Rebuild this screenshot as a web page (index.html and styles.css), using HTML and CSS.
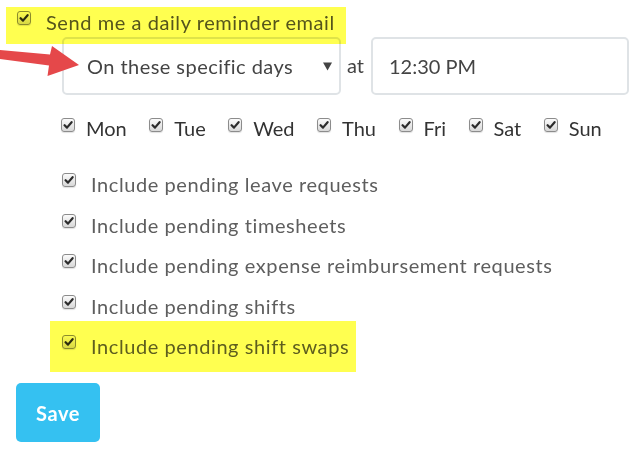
FILE: index.html
```html
<!DOCTYPE html>
<html>
<head>
<meta charset="utf-8">
<link rel="stylesheet" href="styles.css">
</head>
<body>
<div class="page">
  <div class="main">
    <span class="cb"><svg viewBox="0 0 10 10"><path d="M1.6 5.2 L4 7.6 L8.6 2.2" /></svg></span>
    <span class="main-label">Send me a daily reminder email</span>
  </div>
  <div class="schedule">
    <div class="select">
      <span class="select-text">On these specific days</span>
      <svg class="caret" viewBox="0 0 10 9"><path d="M0 0 H10 L5 9 Z"/></svg>
    </div>
    <span class="at">at</span>
    <div class="time">12:30 PM</div>
  </div>
  <div class="days">
    <label class="day"><span class="cb"><svg viewBox="0 0 10 10"><path d="M1.6 5.2 L4 7.6 L8.6 2.2" /></svg></span>Mon</label>
    <label class="day"><span class="cb"><svg viewBox="0 0 10 10"><path d="M1.6 5.2 L4 7.6 L8.6 2.2" /></svg></span>Tue</label>
    <label class="day"><span class="cb"><svg viewBox="0 0 10 10"><path d="M1.6 5.2 L4 7.6 L8.6 2.2" /></svg></span>Wed</label>
    <label class="day"><span class="cb"><svg viewBox="0 0 10 10"><path d="M1.6 5.2 L4 7.6 L8.6 2.2" /></svg></span>Thu</label>
    <label class="day"><span class="cb"><svg viewBox="0 0 10 10"><path d="M1.6 5.2 L4 7.6 L8.6 2.2" /></svg></span>Fri</label>
    <label class="day"><span class="cb"><svg viewBox="0 0 10 10"><path d="M1.6 5.2 L4 7.6 L8.6 2.2" /></svg></span>Sat</label>
    <label class="day"><span class="cb"><svg viewBox="0 0 10 10"><path d="M1.6 5.2 L4 7.6 L8.6 2.2" /></svg></span>Sun</label>
  </div>
  <div class="includes">
    <label class="inc"><span class="cb"><svg viewBox="0 0 10 10"><path d="M1.6 5.2 L4 7.6 L8.6 2.2" /></svg></span><span class="inc-label">Include pending leave requests</span></label>
    <label class="inc"><span class="cb"><svg viewBox="0 0 10 10"><path d="M1.6 5.2 L4 7.6 L8.6 2.2" /></svg></span><span class="inc-label">Include pending timesheets</span></label>
    <label class="inc"><span class="cb"><svg viewBox="0 0 10 10"><path d="M1.6 5.2 L4 7.6 L8.6 2.2" /></svg></span><span class="inc-label">Include pending expense reimbursement requests</span></label>
    <label class="inc"><span class="cb"><svg viewBox="0 0 10 10"><path d="M1.6 5.2 L4 7.6 L8.6 2.2" /></svg></span><span class="inc-label">Include pending shifts</span></label>
    <label class="inc"><span class="cb"><svg viewBox="0 0 10 10"><path d="M1.6 5.2 L4 7.6 L8.6 2.2" /></svg></span><span class="inc-label">Include pending shift swaps</span></label>
  </div>
  <button class="save">Save</button>

  <div class="hl hl-top"></div>
  <div class="hl hl-bottom"></div>
  <svg class="arrow" viewBox="0 0 82 40"><path d="M0 10 L50 14.5 L52 6 L79 25 L47.5 36 L49 25.5 L0 19 Z"/></svg>
</div>
</body>
</html>
```

FILE: styles.css
```css
body {
  margin: 0;
  background: #fff;
  font-family: Lato, "Open Sans", sans-serif;
}

.page {
  position: relative;
  width: 640px;
  height: 461px;
  overflow: hidden;
}

.cb {
  flex: none;
  width: 14px;
  height: 14px;
  box-sizing: border-box;
  border: 1px solid #8c8c8c;
  border-radius: 3px;
  background: linear-gradient(#fbfbfb, #d8d8d8);
  box-shadow: 0 1px 1px rgba(0, 0, 0, 0.12);
  display: flex;
  align-items: center;
  justify-content: center;
}

.cb svg {
  width: 10px;
  height: 10px;
}

.cb path {
  fill: none;
  stroke: #2b2b2b;
  stroke-width: 2.2;
  stroke-linecap: round;
  stroke-linejoin: round;
}

.main {
  display: flex;
  height: 37px;
  padding-left: 17px;
}

.main .cb {
  margin-top: 11px;
}

.main-label {
  margin: 11px 0 0 15px;
  font-size: 20px;
  line-height: 23px;
  letter-spacing: 0.57px;
  color: #555;
}

.schedule {
  display: flex;
  align-items: center;
  margin-left: 62px;
  height: 58px;
}

.select,
.time {
  height: 58px;
  box-sizing: border-box;
  border: 2px solid #dfe3e6;
  border-radius: 5px;
  display: flex;
  align-items: center;
  font-size: 20px;
  color: #444;
}

.select {
  width: 279px;
  padding: 0 7px 0 23px;
  justify-content: space-between;
}

.select-text {
  letter-spacing: 0.45px;
}

.caret {
  width: 9px;
  height: 9px;
  fill: #444;
}

.at {
  width: 24px;
  padding-left: 6px;
  font-size: 20px;
  color: #444;
  margin-top: -2px;
}

.time {
  width: 258px;
  padding-left: 16px;
}

.days {
  display: flex;
  gap: 22.5px;
  margin: 13px 0 0 61px;
  height: 40px;
}

.day {
  display: flex;
  align-items: flex-start;
  font-size: 20px;
  line-height: 40px;
  color: #333;
}

.day .cb {
  margin: 10px 11px 0 0;
}

.includes {
  margin: 16px 0 0 62px;
}

.inc {
  display: flex;
  align-items: flex-start;
  height: 40.5px;
}

.inc .cb {
  margin-top: 9px;
}

.inc-label {
  margin-left: 15px;
  font-size: 20px;
  line-height: 40px;
  letter-spacing: 0.58px;
  color: #5e5e5e;
}

.save {
  display: block;
  margin: 16.5px 0 0 16px;
  width: 84px;
  height: 59px;
  border: 0;
  border-radius: 5px;
  background: #35c1f1;
  color: #fff;
  font-family: Lato, "Open Sans", sans-serif;
  font-weight: bold;
  font-size: 20px;
  letter-spacing: 0.6px;
  padding: 0;
}

.hl {
  position: absolute;
  background: #ffff50;
  mix-blend-mode: multiply;
}

.hl-top {
  left: 6px;
  top: 7px;
  width: 340px;
  height: 37px;
}

.hl-bottom {
  left: 50px;
  top: 321px;
  width: 306px;
  height: 51px;
}

.arrow {
  position: absolute;
  left: 0;
  top: 40px;
  width: 82px;
  height: 40px;
  fill: #e5484a;
}
```
